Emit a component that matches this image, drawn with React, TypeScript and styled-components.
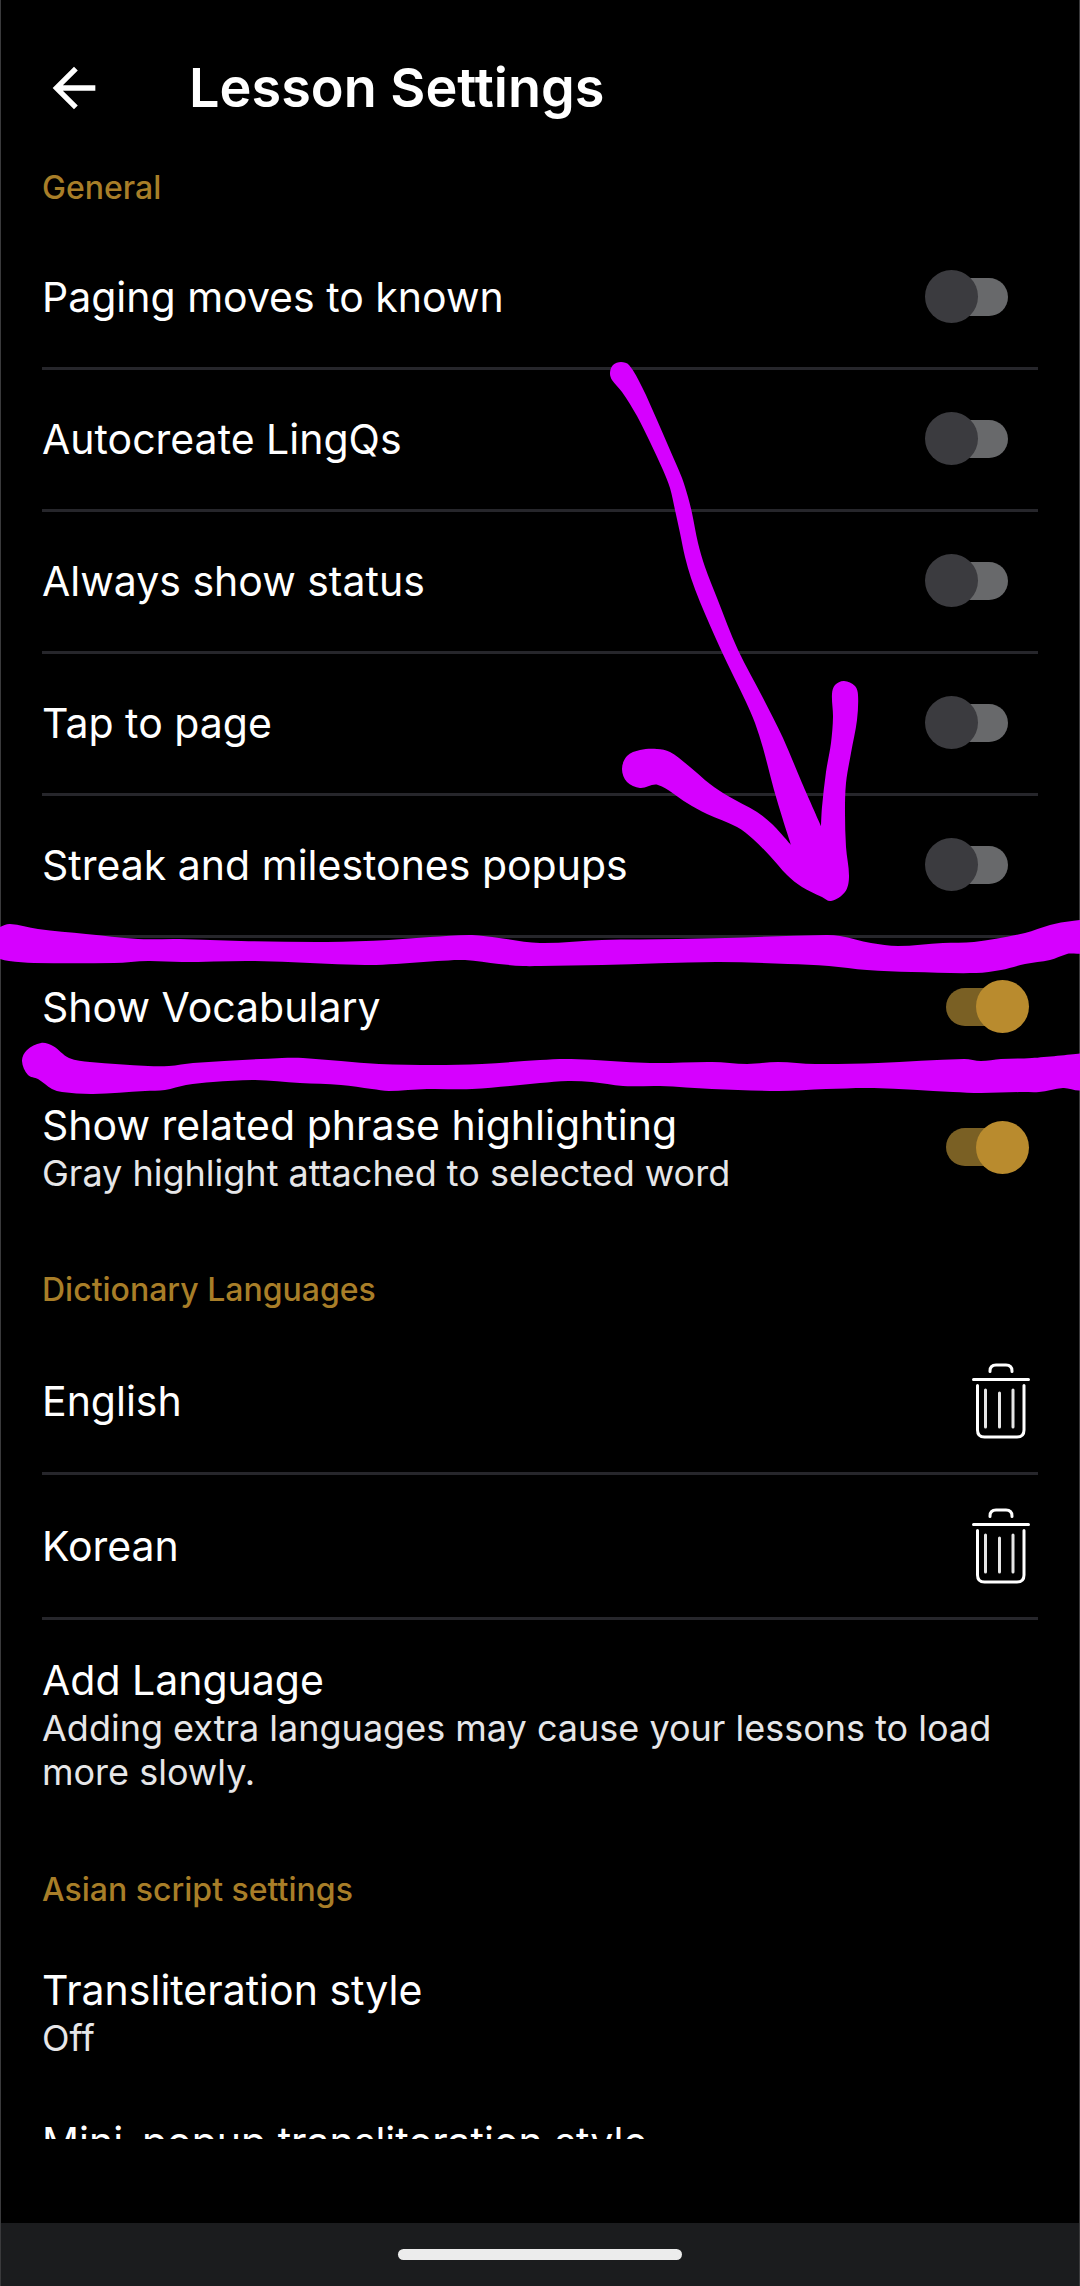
import React, { useState } from "react";
import styled, { createGlobalStyle } from "styled-components";

const GlobalStyle = createGlobalStyle`
  *, *::before, *::after { box-sizing: border-box; }
  body {
    margin: 0;
    background: #000;
    color: #fff;
    font-family: Inter, Roboto, "Liberation Sans", sans-serif;
  }
  h1, h2, p { margin: 0; }
  button {
    padding: 0;
    border: 0;
    background: none;
    color: inherit;
    font: inherit;
    text-align: left;
    cursor: pointer;
  }
`;

const Screen = styled.div`
  position: relative;
  display: flex;
  flex-direction: column;
  height: 100vh;
  background: #000;
  border: solid #3a3a3c;
  border-width: 0 1px;
`;

const TopBar = styled.header`
  flex: none;
  display: flex;
  align-items: center;
  gap: 83px;
  height: 168px;
  padding: 8px 41px 0;
`;

const BackButton = styled.button`
  display: flex;
`;

const Title = styled.h1`
  font-size: 54px;
  line-height: 64px;
  font-weight: 600;
`;

const Content = styled.main`
  flex: 1;
  min-height: 0;
  overflow: hidden;
  padding: 0 41px;
`;

const Section = styled.section`
  & + & {
    padding-top: 54px;
  }
`;

const SectionTitle = styled.h2`
  padding-bottom: 20px;
  color: #a87e28;
  font-size: 32px;
  line-height: 40px;
  font-weight: 500;
`;

const Row = styled.div`
  display: flex;
  align-items: center;
  justify-content: space-between;
  min-height: 145px;
  padding: 19px 8px 19px 0;
  border-bottom: 3px solid #26262b;
`;

const SwitchRow = styled.label<{ $divided?: boolean }>`
  display: flex;
  align-items: center;
  justify-content: space-between;
  min-height: ${(p) => (p.$divided ? 142 : 136)}px;
  padding: 18px 9px 20px 0;
  border-bottom: ${(p) => (p.$divided ? "3px solid #26262b" : "0")};
  cursor: pointer;
`;

const ActionRow = styled.button`
  display: block;
  width: 100%;
  padding: 35px 0 22px;
`;

const TextBlock = styled.span`
  display: block;
`;

const Label = styled.span`
  display: block;
  font-size: 41px;
  line-height: 50px;
`;

const Detail = styled.span`
  display: block;
  margin-top: 1px;
  color: #e6e6e8;
  font-size: 36px;
  line-height: 44px;
`;

const Switch = styled.input`
  appearance: none;
  flex: none;
  display: grid;
  align-items: center;
  width: 104px;
  height: 53px;
  margin: 0;
  cursor: pointer;

  &::before,
  &::after {
    content: "";
    grid-area: 1 / 1;
  }
  &::before {
    height: 38px;
    margin: 0 21px;
    border-radius: 19px;
    background: #68696b;
  }
  &::after {
    width: 53px;
    height: 53px;
    border-radius: 50%;
    background: #3b3b3f;
  }
  &:checked::before {
    background: #7a6024;
  }
  &:checked::after {
    justify-self: end;
    background: #b98b2e;
  }
`;

const IconButton = styled.button`
  display: flex;
`;

const BottomInset = styled.div`
  flex: none;
  height: 84px;
`;

const NavBar = styled.footer`
  flex: none;
  display: flex;
  align-items: center;
  justify-content: center;
  height: 63px;
  background: #1b1c1e;
`;

const NavHandle = styled.span`
  width: 284px;
  height: 11px;
  border-radius: 6px;
  background: #ececec;
`;

const InkLayer = styled.svg`
  position: absolute;
  top: 0;
  left: -1px;
  width: 100vw;
  pointer-events: none;
`;

type Point = [number, number];

const ARROW: Point[] = [
  [610, 373], [613, 365], [621, 362], [629, 365], [642, 387], [657, 420], [670, 450], [682, 478],
  [688, 497], [692, 513], [698, 543], [705, 567], [717, 598], [738, 650], [763, 698], [783, 738],
  [802, 783], [821, 826], [822, 807], [826, 772], [831, 743], [833, 717], [832, 694], [835, 685],
  [844, 681], [855, 686], [858, 695], [857, 720], [851, 753], [846, 783], [845, 813], [846, 847],
  [849, 877], [845, 892], [831, 901], [822, 897], [802, 887], [787, 875], [770, 856], [753, 839],
  [737, 827], [707, 814], [687, 803], [658, 785], [640, 788], [627, 782], [622, 769], [627, 756],
  [640, 750], [657, 749], [670, 752], [690, 767], [710, 784], [728, 796], [757, 812], [772, 824],
  [791, 845], [783, 820], [774, 790], [763, 748], [755, 723], [746, 702], [721, 650], [700, 602],
  [691, 578], [685, 557], [680, 533], [675, 510], [670, 488], [663, 470], [650, 442], [637, 416],
  [622, 392], [612, 380],
];

const UPPER_LINE: Point[] = [
  [-4, 930], [0, 927], [10, 924], [38, 929], [86, 934], [138, 939], [179, 939], [241, 941],
  [327, 942], [389, 940], [430, 937], [472, 935], [499, 938], [540, 943], [602, 940], [678, 939],
  [726, 938], [826, 935], [840, 936], [871, 943], [898, 946], [943, 943], [974, 942], [1025, 933],
  [1050, 925], [1072, 921], [1084, 922], [1084, 951], [1067, 954], [1050, 960], [1025, 964],
  [1001, 970], [976, 973], [912, 972], [867, 970], [829, 966], [788, 964], [716, 962], [602, 965],
  [540, 966], [523, 966], [499, 964], [465, 960], [437, 961], [396, 964], [365, 965], [255, 961],
  [182, 962], [148, 961], [114, 963], [34, 963], [9, 961], [0, 959], [-4, 957],
];

const LOWER_LINE: Point[] = [
  [41, 1043], [53, 1046], [69, 1058], [90, 1062], [148, 1066], [169, 1066], [193, 1063],
  [282, 1058], [303, 1058], [379, 1064], [434, 1065], [482, 1064], [540, 1060], [571, 1059],
  [650, 1063], [712, 1062], [747, 1064], [778, 1062], [815, 1064], [878, 1063], [964, 1059],
  [981, 1061], [1001, 1059], [1032, 1058], [1084, 1053], [1084, 1088], [1063, 1088], [1039, 1092],
  [1022, 1092], [981, 1093], [953, 1092], [874, 1088], [826, 1089], [778, 1091], [712, 1089],
  [660, 1086], [623, 1086], [592, 1082], [568, 1081], [540, 1083], [510, 1086], [472, 1089],
  [427, 1089], [389, 1091], [372, 1089], [341, 1085], [300, 1083], [255, 1080], [213, 1082],
  [186, 1085], [165, 1090], [145, 1091], [93, 1094], [62, 1092], [52, 1089], [38, 1079],
  [28, 1075], [22, 1061], [27, 1050],
];

/** Closed curve that runs through every point. */
function smoothPath(points: Point[]): string {
  const n = points.length;
  const at = (i: number) => points[(i + n) % n];
  const parts = [`M${points[0].join(" ")}`];
  for (let i = 0; i < n; i++) {
    const [a, b, c, d] = [at(i - 1), at(i), at(i + 1), at(i + 2)];
    const len = Math.hypot(c[0] - b[0], c[1] - b[1]);
    const k1 = (0.33 * len) / Math.hypot(c[0] - a[0], c[1] - a[1]);
    const k2 = (0.33 * len) / Math.hypot(d[0] - b[0], d[1] - b[1]);
    const sharp = (p: Point, q: Point, r: Point) =>
      (q[0] - p[0]) * (r[0] - q[0]) + (q[1] - p[1]) * (r[1] - q[1]) < 0;
    const s1 = sharp(a, b, c) ? 0 : k1;
    const s2 = sharp(b, c, d) ? 0 : k2;
    const c1 = [b[0] + (c[0] - a[0]) * s1, b[1] + (c[1] - a[1]) * s1];
    const c2 = [c[0] - (d[0] - b[0]) * s2, c[1] - (d[1] - b[1]) * s2];
    parts.push(`C${c1.join(" ")} ${c2.join(" ")} ${c.join(" ")}`);
  }
  return parts.join("") + "Z";
}

const BackIcon = () => (
  <svg width="64" height="64" viewBox="0 0 24 24" fill="#fff" aria-hidden="true">
    <path d="M20 11H7.83l5.59-5.59L12 4l-8 8 8 8 1.41-1.41L7.83 13H20z" />
  </svg>
);

const TrashIcon = () => (
  <svg
    width="58"
    height="76"
    viewBox="0 0 58 76"
    fill="none"
    stroke="#fff"
    strokeWidth="3"
    strokeLinecap="round"
    aria-hidden="true"
  >
    <path d="M18 8.500V8q0-6 6-6h10q6 0 6 6V8.500" />
    <path d="M1.500 16.500H56.500" />
    <path d="M5.500 22.500V67q0 7 7 7H45q7 0 7-7V22.500" />
    <path d="M13.500 27V64M27.500 30V64M41 27V64" stroke="#e6e6e6" />
  </svg>
);

interface Setting {
  label: string;
  detail?: string;
  on: boolean;
  divided: boolean;
}

const GENERAL: Setting[] = [
  { label: "Paging moves to known", on: false, divided: true },
  { label: "Autocreate LingQs", on: false, divided: true },
  { label: "Always show status", on: false, divided: true },
  { label: "Tap to page", on: false, divided: true },
  { label: "Streak and milestones popups", on: false, divided: true },
  { label: "Show Vocabulary", on: true, divided: true },
  {
    label: "Show related phrase highlighting",
    detail: "Gray highlight attached to selected word",
    on: true,
    divided: false,
  },
];

function SwitchSetting({ label, detail, on, divided }: Setting) {
  const [checked, setChecked] = useState(on);
  return (
    <SwitchRow $divided={divided}>
      <TextBlock>
        <Label>{label}</Label>
        {detail && <Detail>{detail}</Detail>}
      </TextBlock>
      <Switch
        type="checkbox"
        role="switch"
        checked={checked}
        onChange={(e) => setChecked(e.target.checked)}
      />
    </SwitchRow>
  );
}

export default function App() {
  return (
    <>
      <GlobalStyle />
      <Screen>
        <TopBar>
          <BackButton type="button" aria-label="Back">
            <BackIcon />
          </BackButton>
          <Title>Lesson Settings</Title>
        </TopBar>
        <Content>
          <Section>
            <SectionTitle>General</SectionTitle>
            {GENERAL.map((s) => (
              <SwitchSetting key={s.label} {...s} />
            ))}
          </Section>
          <Section>
            <SectionTitle>Dictionary Languages</SectionTitle>
            {["English", "Korean"].map((language) => (
              <Row key={language}>
                <Label>{language}</Label>
                <IconButton type="button" aria-label={`Remove ${language}`}>
                  <TrashIcon />
                </IconButton>
              </Row>
            ))}
            <ActionRow type="button">
              <Label>Add Language</Label>
              <Detail>Adding extra languages may cause your lessons to load more slowly.</Detail>
            </ActionRow>
          </Section>
          <Section>
            <SectionTitle>Asian script settings</SectionTitle>
            <ActionRow type="button">
              <Label>Transliteration style</Label>
              <Detail>Off</Detail>
            </ActionRow>
            <ActionRow type="button">
              <Label>Mini-popup transliteration style</Label>
            </ActionRow>
          </Section>
        </Content>
        <BottomInset />
        <NavBar>
          <NavHandle />
        </NavBar>
        <InkLayer viewBox="0 0 1080 1120" fill="#d600ff" aria-hidden="true">
          <path d={smoothPath(ARROW)} />
          <path d={smoothPath(UPPER_LINE)} />
          <path d={smoothPath(LOWER_LINE)} />
        </InkLayer>
      </Screen>
    </>
  );
}
